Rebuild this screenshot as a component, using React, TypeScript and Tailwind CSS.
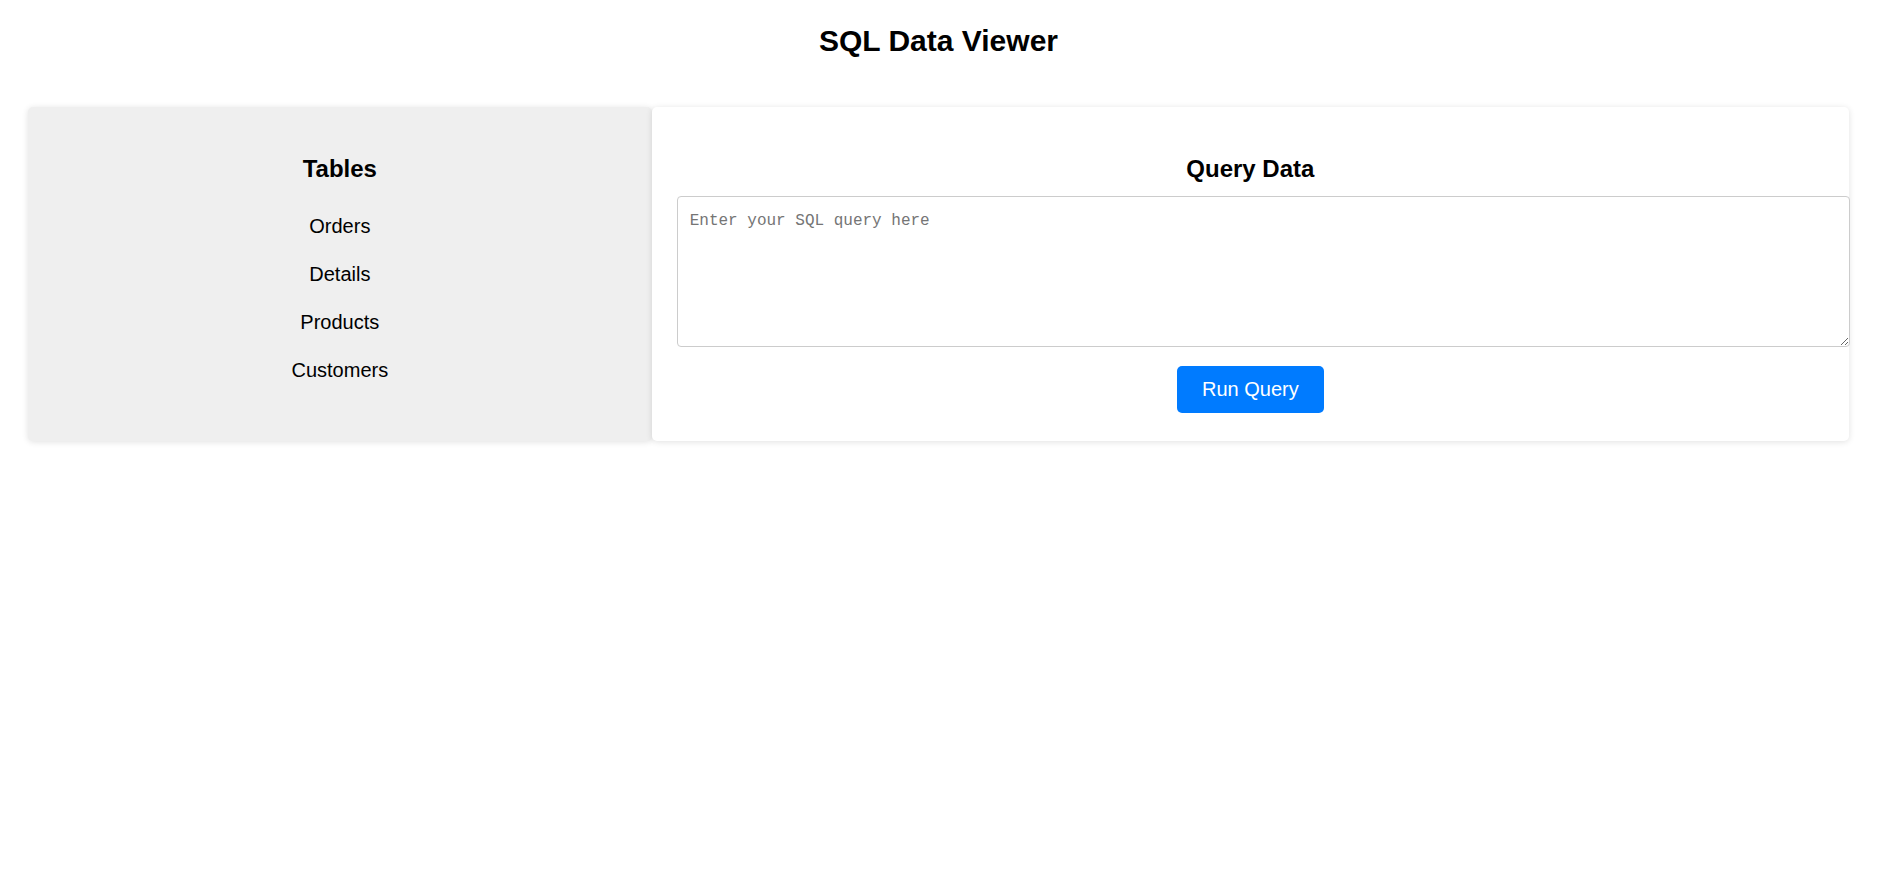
const tables = ['Orders', 'Details', 'Products', 'Customers'];

const App = () => {
  return (
    <div className="min-h-screen bg-white pl-[28px] pr-[43px] font-['Liberation_Sans',Arial,sans-serif] text-black">
      <h1 className="pt-[24px] text-center text-[30px] font-bold leading-[34px]">
        SQL Data Viewer
      </h1>

      <div className="mt-[49px] flex">
        {/* Table list */}
        <div className="flex-1 rounded-[5px] bg-[#efefef] px-[25px] pt-[25px] pb-[59px] shadow-[0_1px_6px_rgba(0,0,0,0.12)]">
          <h2 className="mt-[23px] text-center text-[24px] font-bold leading-[28px]">
            Tables
          </h2>
          <ul className="mt-[32px] flex flex-col gap-[25px]">
            {tables.map((name) => (
              <li
                key={name}
                className="cursor-pointer text-center text-[20px] leading-[23px]"
              >
                {name}
              </li>
            ))}
          </ul>
        </div>

        {/* Query panel */}
        <div className="flex flex-[2] flex-col items-start rounded-[5px] bg-white px-[25px] pt-[25px] pb-[27px] shadow-[0_1px_6px_rgba(0,0,0,0.12)]">
          <h2 className="mt-[23px] w-full text-center text-[24px] font-bold leading-[28px]">
            Query Data
          </h2>
          <textarea
            placeholder="Enter your SQL query here"
            className="mt-[13px] box-border h-[151px] w-[calc(100%+26px)] rounded-[4px] border border-[#cccccc] px-[12px] pt-[15px] font-['Liberation_Mono',monospace] text-[16px] leading-[18px] placeholder:text-[#757575] focus:outline-none"
          />
          <div className="mt-[19px] flex w-full justify-center">
            <button className="h-[47px] rounded-[5px] bg-[#007bff] px-[25px] text-[20px] leading-[23px] text-white">
              Run Query
            </button>
          </div>
        </div>
      </div>
    </div>
  );
};

export default App;
